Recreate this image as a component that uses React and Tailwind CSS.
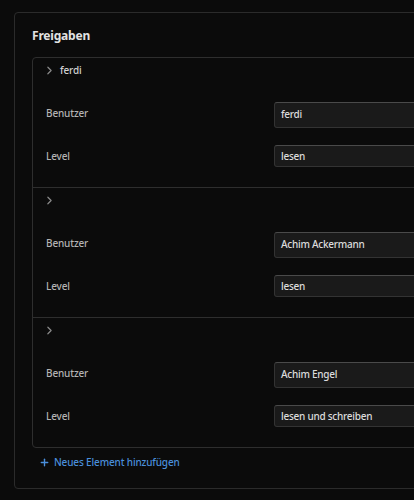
import React from 'react';
import { ChevronRight, Plus } from 'lucide-react';

const items = [
    { id: 1, title: 'ferdi', user: 'ferdi', level: 'lesen' },
    { id: 2, title: '', user: 'Achim Ackermann', level: 'lesen' },
    { id: 3, title: '', user: 'Achim Engel', level: 'lesen und schreiben' },
];

const Row = ({ label, value, tall }) => (
    <div className="flex items-center">
        <div className={`w-[228px] shrink-0 text-[10px] font-medium tracking-[-0.15px] text-[#b4b4b4] ${tall ? 'pb-[3px]' : ''}`}>{label}</div>
        <div
            className={`flex-1 flex items-center px-[6px] bg-[#1a1a1a] border border-[#333] border-t-[#4a4a4a] rounded-[3px] text-[10px] font-medium tracking-[-0.25px] text-[#dcdcdc] ${tall ? 'h-[26px] pb-[1px]' : 'h-[22px]'}`}
        >
            {value}
        </div>
    </div>
);

const Item = ({ item, first }) => (
    <div className={`pl-[13px] pt-[3px] pb-[20px] ${first ? '' : 'border-t border-[#2e2e2e]'}`}>
        <div className="h-[18px] flex items-center gap-[4px] text-[10px] font-medium tracking-[-0.15px] text-[#d0d0d0]">
            <ChevronRight size={13} className="text-[#8a8a8a] -ml-[3px]" strokeWidth={2.2} />
            <span>{item.title}</span>
        </div>
        <div className="mt-[23px]">
            <Row label="Benutzer" value={item.user} tall />
        </div>
        <div className="mt-[17px]">
            <Row label="Level" value={item.level} />
        </div>
    </div>
);

export default function App() {
    return (
        <div
            className="w-[414px] h-[500px] overflow-hidden bg-[#0b0b0b] pt-[12px] pl-[14px]"
            style={{ fontFamily: '"Noto Sans", "Open Sans", sans-serif' }}
        >
            <div className="w-[480px] border border-[#2b2b2b] rounded-[4px] pl-[17px] pt-[13px] pb-[18px]">
                <h2 className="h-[20px] leading-[20px] text-[12px] tracking-[-0.2px] font-bold text-[#e2e2e2]">Freigaben</h2>
                <div className="mt-[11px] border border-[#2e2e2e] rounded-[4px]">
                    {items.map((item, i) => (
                        <Item key={item.id} item={item} first={i === 0} />
                    ))}
                </div>
                <button className="mt-[6px] ml-[7px] h-[16px] flex items-center gap-[4px] text-[10px] font-medium tracking-[-0.15px] text-[#4a8fdc]">
                    <Plus size={11} strokeWidth={3} />
                    <span>Neues Element hinzufügen</span>
                </button>
            </div>
        </div>
    );
}
